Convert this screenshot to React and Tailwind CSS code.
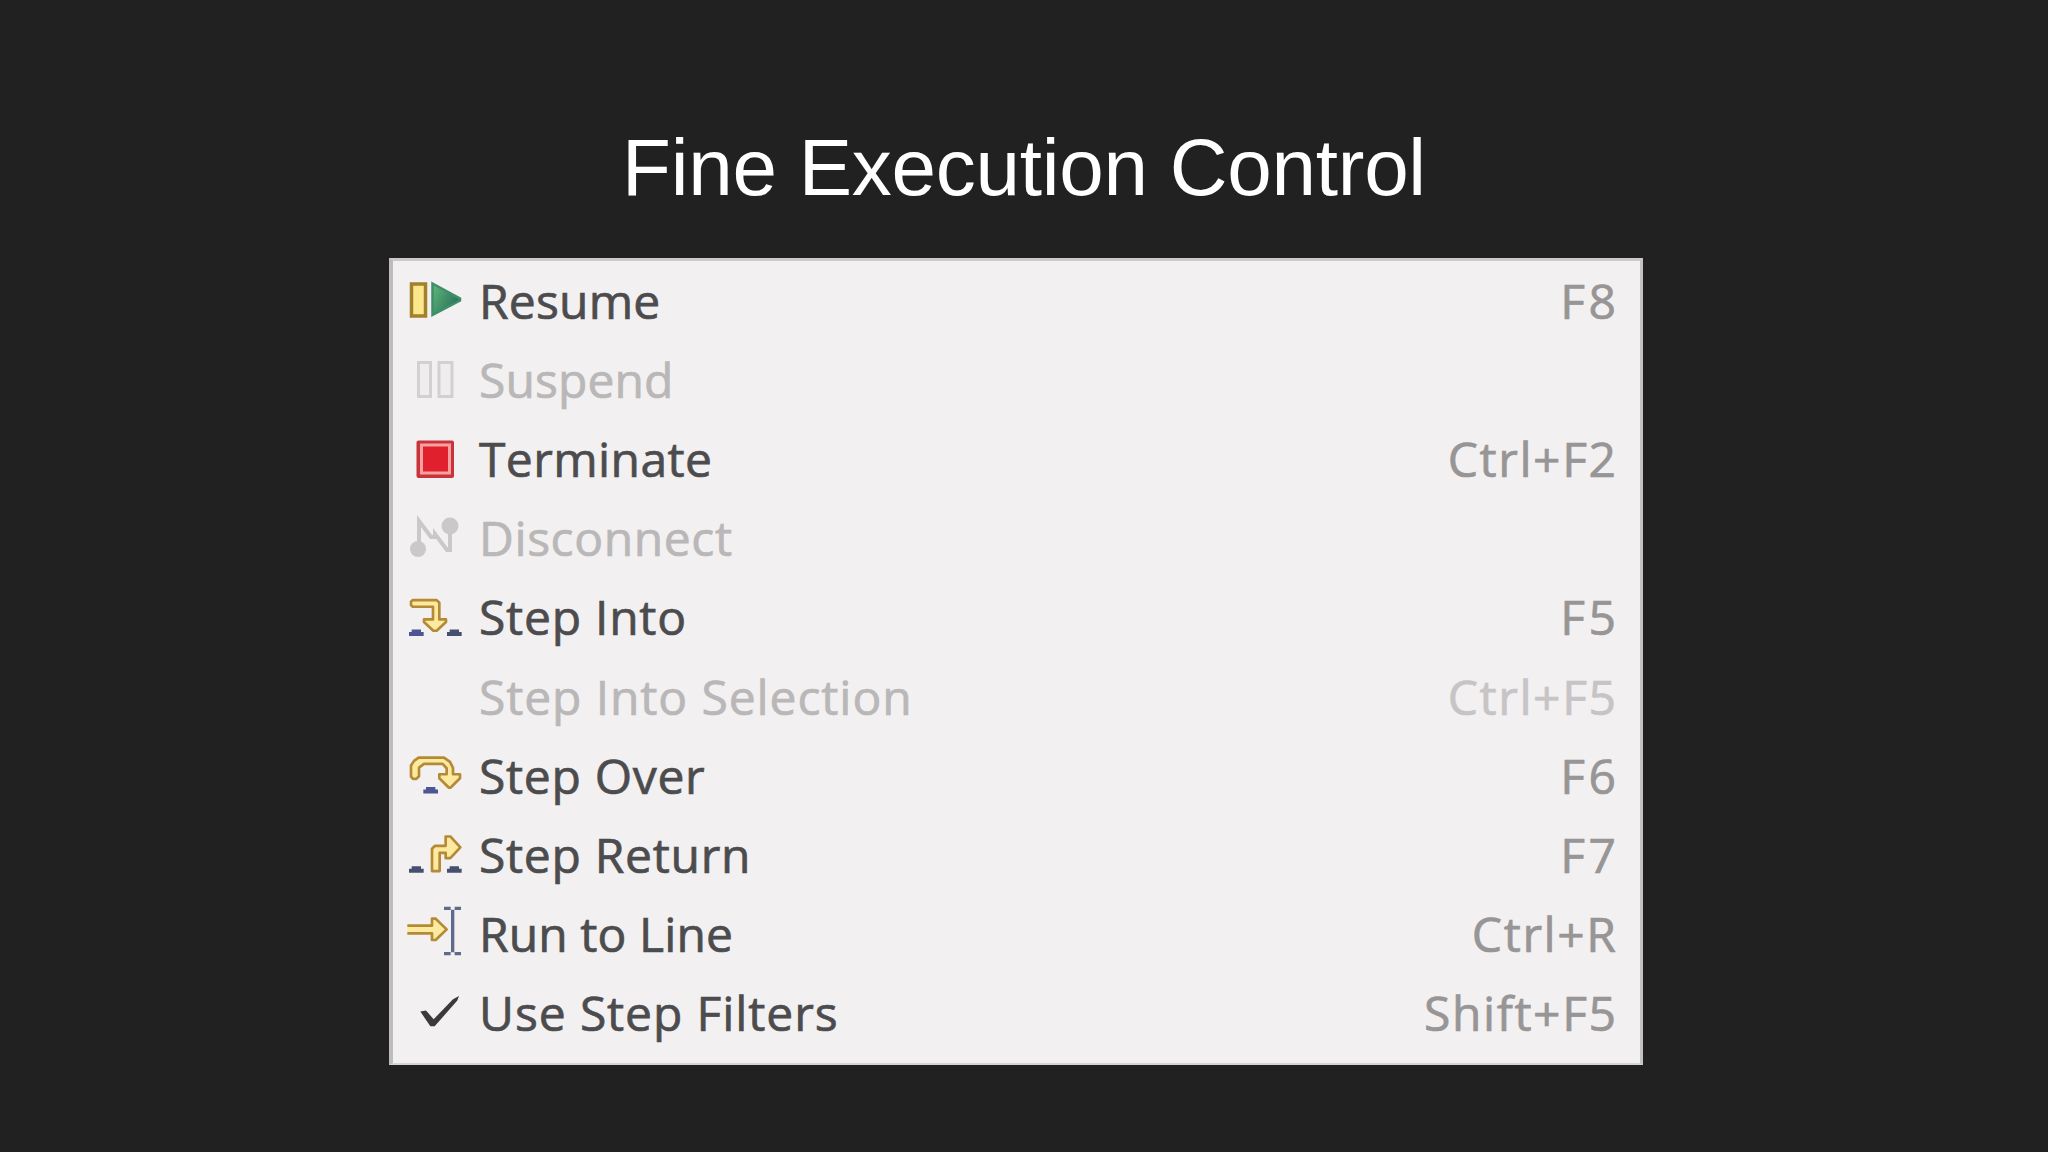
const gold = { fill: '#fdeaa0', stroke: '#b58a35', strokeWidth: 8, strokeLinejoin: 'round' }

function Dash({ x, y, color = '#46506e' }) {
  return <path d={`M${x} ${y + 20}v-12h8v-8h28v8h8v12z`} fill={color} />
}

const icons = {
  resume: (
    <>
      <defs>
        <linearGradient id="play" x1="0" y1="0" x2="1" y2="0.6">
          <stop offset="0" stopColor="#62b878" />
          <stop offset="1" stopColor="#28705c" />
        </linearGradient>
      </defs>
      <rect x="6.5" y="21" width="14" height="32" fill="#fbe78c" stroke="#a3812c" strokeWidth="3.5" />
      <path d="M27.5 20.5L55 35.5v2L27.5 52z" fill="url(#play)" stroke="#3c8f68" strokeWidth="2.5" />
    </>
  ),
  suspend: (
    <g fill="#efeded" stroke="#d2d0d0" strokeWidth="3">
      <rect x="13.5" y="20.5" width="12" height="34" />
      <rect x="34" y="20.5" width="13" height="34" />
    </g>
  ),
  terminate: (
    <>
      <rect x="11.5" y="19.5" width="37.5" height="37.5" rx="2" fill="#c9343c" />
      <rect x="16.5" y="24" width="28" height="28" fill="#e0202c" stroke="#f7a0a0" strokeWidth="3" />
    </>
  ),
  disconnect: (
    <g fill="none" stroke="#cac8c8" strokeWidth="4">
      <path d="M14 48V21l12 16h4v-3l12 16h3V26" />
      <circle cx="13" cy="49" r="8" fill="#cac8c8" stroke="none" />
      <circle cx="45" cy="26" r="8.5" fill="#cac8c8" stroke="none" />
    </g>
  ),
  into: (
    <g transform="translate(-5 11.1) scale(.3333)">
      <path
        d="M33 35l5-5h72l8 8v50h20v8l-28 26h-10l-28-26v-8h27V50H38l-5-5z"
        {...gold}
      />
      <Dash x={27} y={118} color="#4d5693" />
      <Dash x={141} y={118} />
    </g>
  ),
  over: (
    <g transform="translate(-5 7.9) scale(.3333)">
      <path
        d="M33 95V62l9-14 14-10h76l18 13 9 18v19h21v12l-28 28h-6l-28-28V88h22V70l-12-13H72L57 68v26l-8 8h-10z"
        {...gold}
      />
      <Dash x={70} y={126} color="#4d5693" />
    </g>
  ),
  return: (
    <g transform="translate(-5 8.8) scale(.3333)">
      <path d="M96 139V72l9-9h32V35h14l30 33-30 32h-14V84h-18v55z" {...gold} />
      <Dash x={27} y={124} />
      <Dash x={141} y={124} />
    </g>
  ),
  run: (
    <g transform="translate(-25 -5.3) scale(.3333)">
      <path d="M82 108h74V87h11l33 32-33 32h-11v-20H82" {...gold} />
      <path
        d="M192 56h20m12 0h19M218 60v128M192 192h20m12 0h19"
        fill="none"
        stroke="#5f6c89"
        strokeWidth="10"
      />
    </g>
  ),
  check: (
    <path
      transform="translate(-25 -84.4) scale(.3333)"
      d="M121 366l17-3 23 26 58-60 18-10-5 14-68 77h-13z"
      fill="#3a3a3a"
    />
  ),
}

const items = [
  { icon: 'resume', label: 'Resume', keys: 'F8', track: 'tracking-[0.2px]' },
  { icon: 'suspend', label: 'Suspend', track: 'tracking-[0.1px]', disabled: true },
  { icon: 'terminate', label: 'Terminate', keys: 'Ctrl+F2', track: 'tracking-[0.4px]' },
  { icon: 'disconnect', label: 'Disconnect', track: 'tracking-[0.6px]', disabled: true },
  { icon: 'into', label: 'Step Into', keys: 'F5', track: 'tracking-[0.75px]' },
  { label: 'Step Into Selection', keys: 'Ctrl+F5', track: 'tracking-[0.9px]', disabled: true },
  { icon: 'over', label: 'Step Over', keys: 'F6', track: 'tracking-[0.7px]' },
  { icon: 'return', label: 'Step Return', keys: 'F7', track: 'tracking-[0.7px]' },
  { icon: 'run', label: 'Run to Line', keys: 'Ctrl+R', track: 'tracking-[0.1px]' },
  { icon: 'check', label: 'Use Step Filters', keys: 'Shift+F5', track: 'tracking-[0.9px]' },
]

function MenuItem({ item }) {
  const keysTrack =
    item.keys?.length === 2 ? 'tracking-[3.5px] mr-[-3.5px]' : 'tracking-[1.6px] mr-[-1.6px]'

  return (
    <li className="flex h-[79.1px] items-center">
      <svg viewBox="0 0 60 79.1" className="h-full w-[60px] shrink-0">
        {item.icon && icons[item.icon]}
      </svg>
      <span
        className={`mb-[2px] ml-[14px] ${item.track} ${item.disabled ? 'text-[#b9b7b7]' : 'text-[#4c4c4e]'}`}
      >
        {item.label}
      </span>
      {item.keys && (
        <span
          className={`mb-[2px] ml-auto ${keysTrack} ${item.disabled ? 'text-[#c6c4c4]' : 'text-[#979595]'}`}
        >
          {item.keys}
        </span>
      )}
    </li>
  )
}

export default function App() {
  return (
    <main className="h-[1152px] w-[2048px] overflow-hidden bg-[#212121] pt-[122px]">
      <h1 className="text-center font-['Liberation_Sans',Arial,sans-serif] text-[80px] leading-[92px] tracking-[-0.25px] text-white">
        Fine Execution Control
      </h1>
      <ul className="mt-[44px] ml-[389px] h-[807px] w-[1254px] border-t-3 border-r-3 border-b-2 border-l-4 border-t-[#cbc9c9] border-r-[#c4c2c2] border-b-[#d6d4d4] border-l-[#bdbbbb] bg-[#f2f0f0] pt-[1.5px] pr-[24px] pl-[12px] font-['Open_Sans','Noto_Sans',sans-serif] text-[48px] leading-none whitespace-nowrap [-webkit-text-stroke:0.7px]">
        {items.map((item) => (
          <MenuItem key={item.label} item={item} />
        ))}
      </ul>
    </main>
  )
}
